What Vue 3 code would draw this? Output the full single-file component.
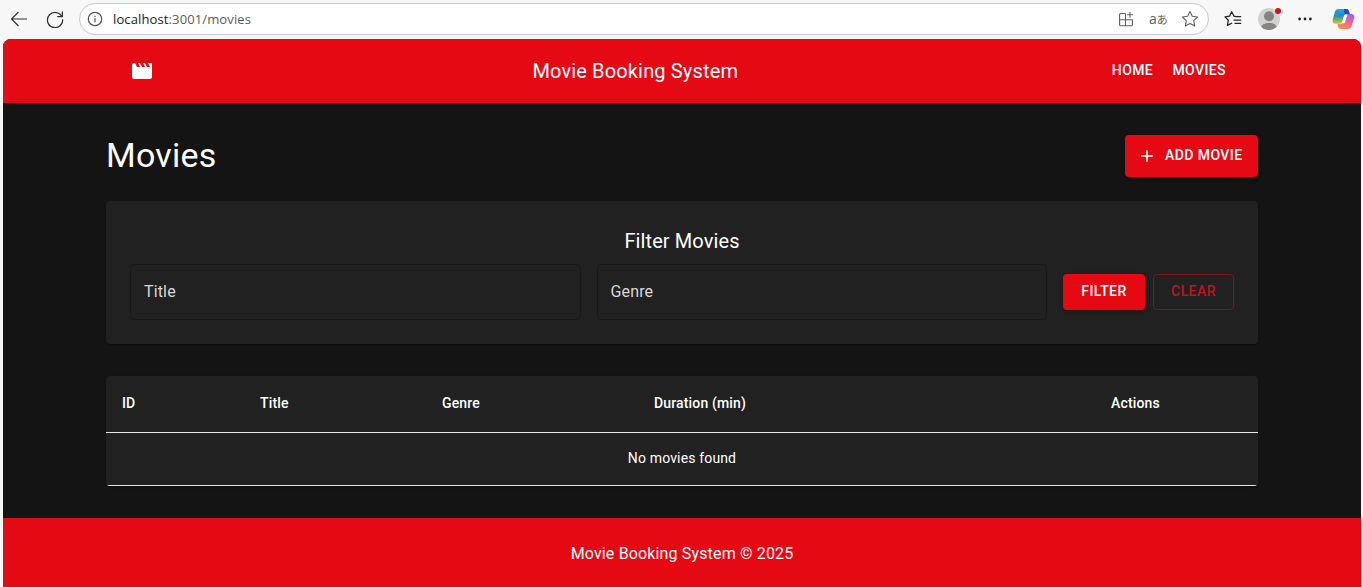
<script setup>
import { ref } from 'vue'

const columns = ['ID', 'Title', 'Genre', 'Duration (min)', 'Actions']
const fields = ['Title', 'Genre']
const movies = ref([])
</script>

<template>
  <div class="window">
    <div class="chrome">
      <svg class="back" width="18" height="16" viewBox="0 0 18 16" fill="none" stroke="#303030" stroke-width="1.2"><path d="M17 8H1.5M8.5 1L1.5 8l7 7" /></svg>
      <svg class="reload" width="18" height="18" viewBox="0 0 18 18" fill="none" stroke="#303030" stroke-width="1.25"><path d="M16.1 7.2A7.6 7.6 0 1 0 16.6 9.3M16.4 1.5v5.2h-5.2" /></svg>
      <div class="address">
        <svg class="info" width="16" height="16" viewBox="0 0 16 16" fill="none" stroke="#555"><circle cx="8" cy="8" r="6.7" stroke-width="1.2" /><path d="M8 7v4.2M8 4.7v1.3" stroke-width="1.2" /></svg>
        <span class="url"><b>localhost</b>:3001/movies</span>
        <svg width="16" height="16" viewBox="0 0 16 16" fill="none" stroke="#606060" stroke-width="1.1"><path d="M7.5 2.5H2.6a1 1 0 0 0-1 1v10.3a1 1 0 0 0 1 1h10.8a1 1 0 0 0 1-1V8.7H1.6M7.5 2.5v12.3M12 .8v6M9 3.8h6" /></svg>
        <span class="translate">a<i>あ</i></span>
        <svg class="star" width="18" height="18" viewBox="0 0 18 18" fill="none" stroke="#606060" stroke-width="1.1" stroke-linejoin="round"><path d="M9 1.4l2.3 4.9 5.3.7-3.9 3.7 1 5.4L9 13.5l-4.7 2.6 1-5.4L1.4 7l5.3-.7z" /></svg>
      </div>
      <svg class="favorites" width="18" height="18" viewBox="0 0 18 18" fill="none" stroke="#242424" stroke-width="1.25" stroke-linejoin="round" stroke-linecap="round"><path d="M11.2 6.3H10L7.7 1.7 5.5 6.2 1 6.9l3.3 3.4-.9 5.1 4.3-2.2M11.7 6.6h5M10 10h6.7M11 13.4h5.7" /></svg>
      <div class="avatar">
        <svg width="22" height="22" viewBox="0 0 22 22"><defs><clipPath id="disc"><circle cx="11" cy="11" r="11" /></clipPath></defs><g clip-path="url(#disc)"><path d="M0 0h22v22H0z" fill="#d3d1cf" /><circle cx="11" cy="8.2" r="5" fill="#868482" /><ellipse cx="11" cy="20" rx="8" ry="5.2" fill="#868482" /></g></svg>
        <span class="alert"></span>
      </div>
      <svg class="dots" width="14" height="4" viewBox="0 0 14 4" fill="#222"><circle cx="1.6" cy="2" r="1.4" /><circle cx="7" cy="2" r="1.4" /><circle cx="12.4" cy="2" r="1.4" /></svg>
      <svg class="copilot" width="23" height="22" viewBox="0 0 23 22">
        <defs>
          <linearGradient id="cool" x1="0" y1="0" x2="0" y2="1"><stop offset="0" stop-color="#22a6ee" /><stop offset=".45" stop-color="#2488c5" /><stop offset=".75" stop-color="#70b95a" /><stop offset="1" stop-color="#e5c62e" /></linearGradient>
          <linearGradient id="warm" x1=".7" y1="0" x2=".3" y2="1"><stop offset="0" stop-color="#a361ec" /><stop offset=".5" stop-color="#ef648d" /><stop offset="1" stop-color="#ff9651" /></linearGradient>
        </defs>
        <path d="M6.500 1h8c1.300 0 2 .8 2.300 1.900l.9 3h-3c-1.600 0-2.400.8-2.900 2.300l-1.500 5c-.5 1.700-1.400 2.500-3 2.500H3.500C1.200 15.700 0 14 .6 12L2.800 4C3.400 2 4.500 1 6.500 1z" fill="url(#cool)" />
        <path d="M12 1h2.500c1.300 0 2 .8 2.300 1.900l.9 3h-3c-1.200 0-1.900.4-2.400 1.200z" fill="#2351b8" />
        <path d="M16 21H8.500c-1.300 0-2-.8-2.300-1.900l-.9-3.400h3c1.600 0 2.400-.8 2.900-2.300l1.500-5c.5-1.700 1.400-2.500 3-2.500h3.800c2 0 3.200 1.700 2.800 3.700L19.700 18c-.7 2-1.700 3-3.700 3z" fill="url(#warm)" />
        <path d="M12.300 6.800h3.200l-2.800 8.400H8.700c1.300-.3 1.900-1 2.300-2.300z" fill="#fbf5f8" />
      </svg>
    </div>

    <div class="page">
      <header class="appbar">
        <div class="toolbar">
          <svg class="logo" width="24" height="24" viewBox="0 0 24 24" fill="#fff"><path d="m18 4 2 4h-3l-2-4h-2l2 4h-3l-2-4H8l2 4H7L5 4H4c-1.100 0-1.990.9-1.990 2L2 18c0 1.100.9 2 2 2h16c1.100 0 2-.9 2-2V4h-4z" /></svg>
          <div class="brand">Movie Booking System</div>
          <nav><a>HOME</a><a>MOVIES</a></nav>
        </div>
      </header>

      <main>
        <div class="heading">
          <h1>Movies</h1>
          <button class="btn add">
            <svg width="20" height="20" viewBox="0 0 24 24" fill="#fff"><path d="M19 13h-6v6h-2v-6H5v-2h6V5h2v6h6z" /></svg>
            <span>ADD MOVIE</span>
          </button>
        </div>

        <section class="paper filter">
          <h2>Filter Movies</h2>
          <div class="controls">
            <div v-for="field in fields" :key="field" class="field">{{ field }}</div>
            <div class="actions">
              <button class="btn apply"><span>FILTER</span></button>
              <button class="btn clear"><span>CLEAR</span></button>
            </div>
          </div>
        </section>

        <section class="paper listing">
          <table>
            <colgroup><col class="c-id"><col class="c-title"><col class="c-genre"><col class="c-duration"><col></colgroup>
            <thead><tr><th v-for="column in columns" :key="column">{{ column }}</th></tr></thead>
            <tbody><tr v-if="!movies.length"><td colspan="5">No movies found</td></tr></tbody>
          </table>
        </section>
      </main>

      <footer>Movie Booking System © 2025</footer>
    </div>
  </div>
</template>

<style>
body { margin: 0; background: #f7f7f7; overflow: hidden; }
</style>

<style scoped>
* { box-sizing: border-box; }
.window { width: 1363px; height: 587px; overflow: hidden; display: flex; flex-direction: column; background: #f7f7f7; font-family: Roboto, "Liberation Sans", sans-serif; color: #fff; }
svg { display: block; flex: none; }
.chrome { height: 39px; flex: none; display: flex; align-items: center; padding: 0 8px 1px 10px; }
.reload { margin-left: 18px; }
.address { width: 1130px; height: 32px; margin-left: 15px; border: 1px solid #c9c9c9; border-radius: 16px; background: #fff; display: flex; align-items: center; padding: 0 9px 0 7px; flex: none; }
.url { flex: 1; margin-left: 10px; font: 13px/20px "Open Sans", "Noto Sans", sans-serif; letter-spacing: .12px; color: #5c5c5c; }
.url b { font-weight: 400; color: #222; }
.translate { display: flex; align-items: center; margin: 0 13px 0 15px; width: 19px; font: 14px/18px "Open Sans", sans-serif; color: #606060; }
.translate i { font: 11px/14px "Noto Sans CJK JP", sans-serif; }
.favorites { margin-left: 15px; }
.avatar { position: relative; margin-left: 16px; }
.alert { position: absolute; left: 17px; top: 0; width: 6px; height: 6px; border-radius: 50%; background: #d50f1c; }
.dots { margin-left: 18px; }
.copilot { margin-left: 20px; }
.page { flex: 1; margin: 0 2px 0 3px; border-radius: 8px 8px 0 0; overflow: hidden; background: #141414; display: flex; flex-direction: column; }
.appbar { height: 64px; flex: none; background: #e50914; }
.toolbar { width: 1152px; height: 64px; margin: 0 auto; padding: 0 24px; display: flex; align-items: center; }
.logo { margin-right: 16px; }
.brand { flex: 1; text-align: center; font-size: 20px; line-height: 32px; font-weight: 400; letter-spacing: .15px; }
nav { display: flex; }
nav a { min-width: 64px; padding: 5px 8px 7px; text-align: center; font-size: 14px; line-height: 24px; font-weight: 470; letter-spacing: .4px; }
main { width: 1152px; margin: 0 auto; padding-top: 32px; flex: none; }
.heading { height: 42px; display: flex; justify-content: space-between; margin-bottom: 24px; }
h1 { margin: 0; font-size: 34px; line-height: 40px; font-weight: 400; letter-spacing: .25px; }
.btn { font: 470 14px/24px Roboto, sans-serif; letter-spacing: .43px; border: 0; border-radius: 4px; padding: 0; color: #fff; background: #e50914; display: flex; align-items: center; justify-content: center; box-shadow: 0 3px 1px -2px rgba(0,0,0,.2), 0 2px 2px rgba(0,0,0,.14), 0 1px 5px rgba(0,0,0,.12); }
.btn span { padding-bottom: 2px; }
.add { width: 133px; gap: 8px; justify-content: flex-start; padding-left: 12px; }
.paper { background: #212121; border-radius: 4px; box-shadow: 0 2px 1px -1px rgba(0,0,0,.2), 0 1px 1px rgba(0,0,0,.14), 0 1px 3px rgba(0,0,0,.12); }
.filter { height: 143px; padding: 24px; margin-bottom: 32px; }
h2 { margin: 0 0 7px; text-align: center; font-size: 20px; line-height: 32px; font-weight: 450; letter-spacing: .1px; }
.controls { display: flex; align-items: center; gap: 16px; }
.field { flex: 1; height: 56px; border: 1px solid #191919; border-radius: 4px; padding: 0 13px; font-size: 16px; line-height: 54px; letter-spacing: .15px; color: #d8d8d8; }
.actions { display: flex; gap: 8px; }
.apply { width: 82px; height: 36px; }
.clear { width: 81px; height: 36px; background: none; border: 1px solid #83151b; color: #c4131c; box-shadow: none; }
.listing { overflow: hidden; height: 110px; }
table { width: 100%; table-layout: fixed; border-collapse: separate; border-spacing: 0; }
.c-id { width: 138px; }
.c-title { width: 182px; }
.c-genre { width: 212px; }
.c-duration { width: 375px; }
th, td { padding: 0 16px; border-bottom: 1px solid #e6e6e6; font-size: 14px; letter-spacing: .15px; }
th { height: 57px; padding-bottom: 2px; text-align: left; font-weight: 460; }
th:last-child { text-align: center; }
td { height: 53px; padding-bottom: 2px; text-align: center; font-weight: 400; }
footer { flex: 1; margin-top: 32px; background: #e50914; padding-top: 24px; text-align: center; font-size: 16px; line-height: 24px; letter-spacing: .15px; }
</style>
